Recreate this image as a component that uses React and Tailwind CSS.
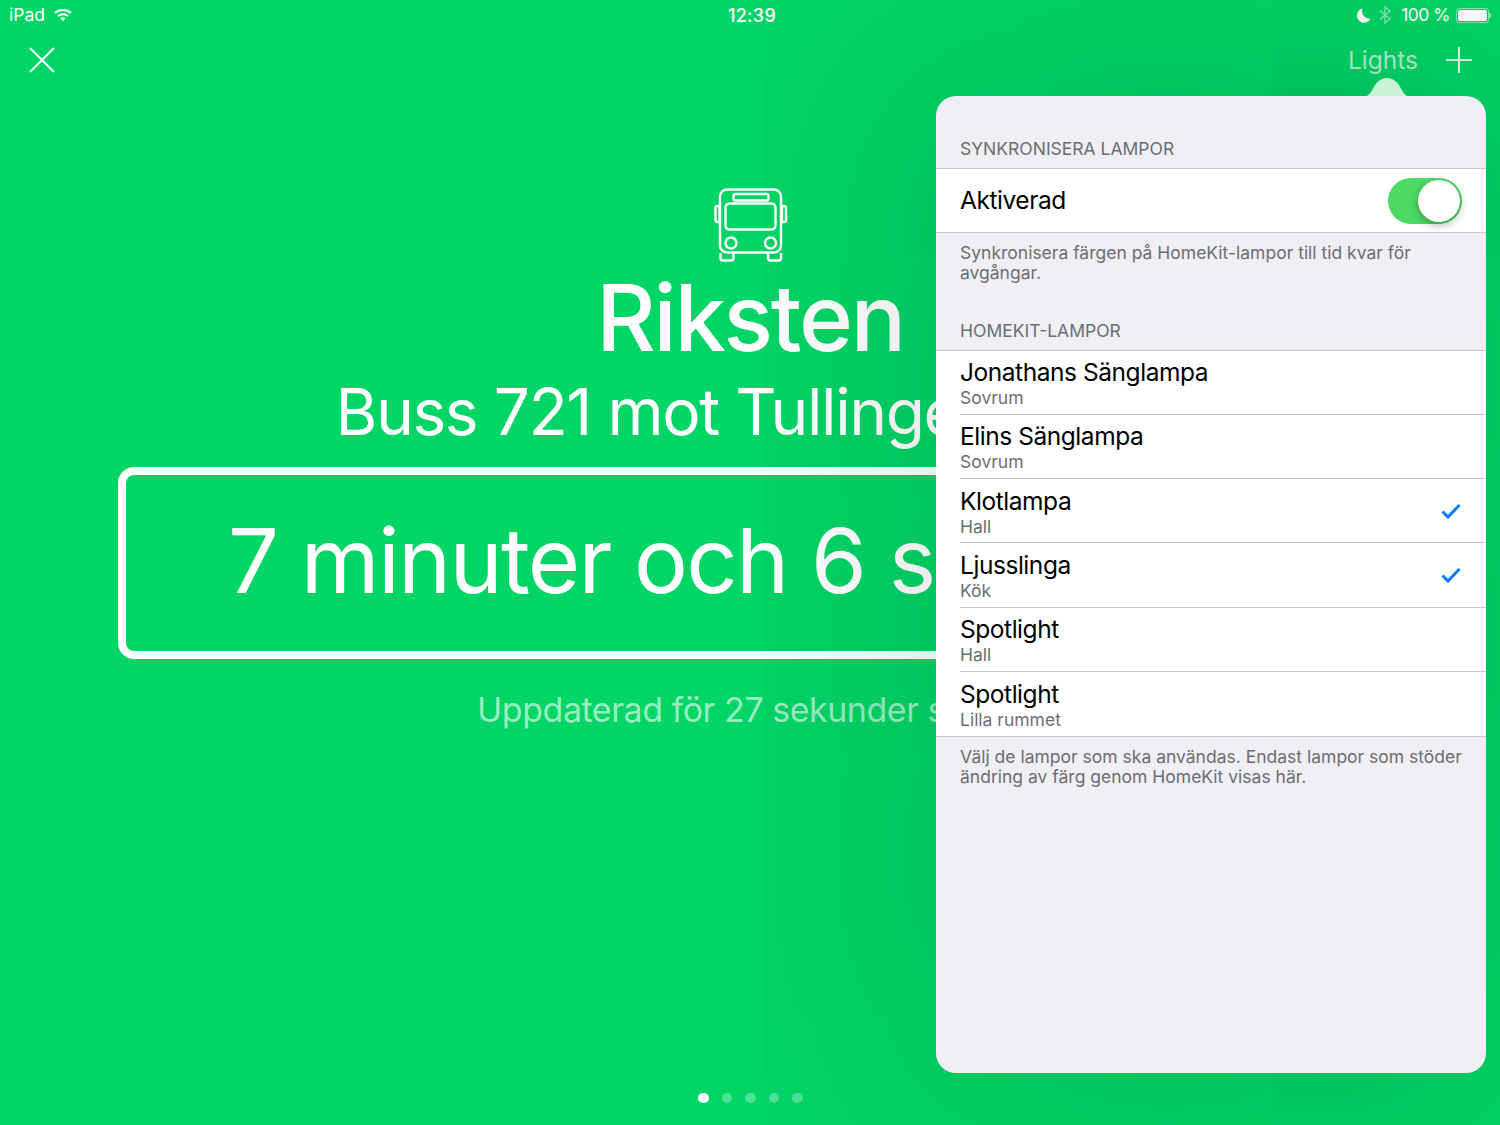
import React from "react";

const font = { fontFamily: "Inter, Roboto, 'Liberation Sans', sans-serif" };

const lamps = [
  { name: "Jonathans Sänglampa", room: "Sovrum" },
  { name: "Elins Sänglampa", room: "Sovrum" },
  { name: "Klotlampa", room: "Hall", checked: true },
  { name: "Ljusslinga", room: "Kök", checked: true },
  { name: "Spotlight", room: "Hall" },
  { name: "Spotlight", room: "Lilla rummet" },
];

const WifiIcon = () => (
  <svg width="18" height="14" viewBox="0 0 18 14" fill="none" stroke="white" strokeWidth="2">
    <path d="M1 5 C5.5 1 12.5 1 17 5" />
    <path d="M4 8 C6.8 5.6 11.2 5.6 14 8" />
    <path d="M6.3 10.3 L9 13.2 L11.7 10.3 C10.2 9 7.8 9 6.3 10.3 Z" fill="white" stroke="none" />
  </svg>
);

const MoonIcon = () => (
  <svg width="14" height="15" viewBox="0 0 14 15">
    <path d="M5.5 0.5 A7.2 7.2 0 1 0 13.6 10.6 A7.6 7.6 0 0 1 5.5 0.5 Z" fill="white" />
  </svg>
);

const BluetoothIcon = () => (
  <svg width="13" height="18" viewBox="0 0 13 18" fill="none" stroke="white" strokeOpacity="0.5" strokeWidth="1.4">
    <path d="M1 4.6 L11 13 L6 17 L6 1 L11 5 L1 13.4" />
  </svg>
);

const BatteryIcon = () => (
  <div className="flex items-center">
    <div className="h-[15px] w-[33px] rounded-[3px] border border-white/50 p-[1px]">
      <div className="h-full w-full rounded-[2px] bg-white" />
    </div>
    <div className="h-[5px] w-[2px] rounded-r-[1px] bg-white/50" />
  </div>
);

const BusIcon = () => (
  <svg width="74" height="74" viewBox="0 0 74 74" fill="none" stroke="white" strokeWidth="2.4" className="ml-[1px]">
    <rect x="6" y="1.5" width="61" height="63" rx="7" />
    <rect x="19.5" y="6" width="35" height="6.5" rx="2" />
    <rect x="11.5" y="15.5" width="50" height="26" rx="4" />
    <circle cx="17" cy="55" r="5.5" />
    <circle cx="56.5" cy="55" r="5.5" />
    <path d="M1.5 20 Q1.5 18 3.5 18 L5.5 18 L5.5 34 L3.5 34 Q1.5 34 1.5 32 Z" />
    <path d="M72 20 Q72 18 70 18 L68 18 L68 34 L70 34 Q72 34 72 32 Z" />
    <path d="M6.5 65 L6.5 70 Q6.5 72.5 9 72.5 L17 72.5 Q19.5 72.5 19.5 70 L19.5 65" />
    <path d="M54 65 L54 70 Q54 72.5 56.5 72.5 L64.5 72.5 Q67 72.5 67 70 L67 65" />
  </svg>
);

const CheckIcon = () => (
  <svg width="20" height="16" viewBox="0 0 20 16" fill="none" stroke="#0a7aff" strokeWidth="3">
    <path d="M1.5 8.5 L7 14 L18.5 2" />
  </svg>
);

const PopoverArrow = () => (
  <svg width="42" height="18" viewBox="0 0 42 18" className="ml-[430px] block">
    <path d="M0 18 C3 18 5 14 9 7 C12 2.5 17 0 21 0 C25 0 30 2.5 33 7 C37 14 39 18 42 18 Z" fill="#c9f4d5" />
  </svg>
);

const SectionLabel = ({ children, className }) => (
  <p className={`px-6 text-[17.5px] leading-5 uppercase text-[#6d6d72] ${className}`}>{children}</p>
);

const LampRow = ({ lamp, last }) => (
  <div className={`flex pl-6 ${last ? "h-[63.6px]" : "h-[64.33px]"}`}>
    <div className={`flex flex-1 items-center justify-between pr-[25px] ${last ? "" : "border-b border-[#c8c7cc]"}`}>
      <div className="pt-[3px]">
        <p className="text-[24.5px] leading-[29px] tracking-[-0.45px] text-black">{lamp.name}</p>
        <p className="text-[17.5px] leading-[22px] text-[#6d6d72]">{lamp.room}</p>
      </div>
      {lamp.checked && <CheckIcon />}
    </div>
  </div>
);

const LightsPopover = () => (
  <div className="absolute top-[78px] left-[936px] w-[550px]">
    <PopoverArrow />
    <div className="h-[977px] rounded-[20px] bg-[#efeff4] pt-[43px] shadow-[0_0_250px_rgba(0,0,0,0.22)]">
      <SectionLabel className="pb-[9px]">Synkronisera lampor</SectionLabel>
      <div className="flex h-[65px] items-center justify-between border-y border-[#c8c7cc] bg-white pr-6 pl-6">
        <span className="text-[24.5px] tracking-[-0.45px] text-black">Aktiverad</span>
        <div className="flex h-[46px] w-[74px] items-center justify-end rounded-full bg-[#4cd964] p-[2px]">
          <div className="h-[42px] w-[42px] rounded-full bg-white shadow-[0_3px_8px_rgba(0,0,0,0.3)]" />
        </div>
      </div>
      <p className="px-6 pt-[10px] text-[17.5px] leading-5 text-[#6d6d72]">
        Synkronisera färgen på HomeKit-lampor till tid kvar för avgångar.
      </p>
      <SectionLabel className="pt-[38px] pb-[8.5px]">HomeKit-lampor</SectionLabel>
      <div className="border-y border-[#c8c7cc] bg-white">
        {lamps.map((lamp, i) => (
          <LampRow key={i} lamp={lamp} last={i === lamps.length - 1} />
        ))}
      </div>
      <p className="px-6 pt-[10px] text-[17.5px] leading-5 text-[#6d6d72]">
        Välj de lampor som ska användas. Endast lampor som stöder ändring av färg genom HomeKit visas här.
      </p>
    </div>
  </div>
);

export default function App() {
  return (
    <div className="relative flex h-[1125px] w-[1500px] flex-col overflow-hidden bg-[#00d566] text-white" style={font}>
      {/* status bar */}
      <div className="grid h-[30px] grid-cols-3 items-center px-[9px] text-[17.5px]">
        <div className="flex items-center gap-[9px]">
          <span>iPad</span>
          <WifiIcon />
        </div>
        <span className="pl-[4px] text-center text-[18px] font-medium tracking-[0.3px]">12:39</span>
        <div className="flex items-center justify-end gap-[8px]">
          <MoonIcon />
          <BluetoothIcon />
          <span className="mr-[-2px] ml-[1px] tracking-[-0.5px]">100 %</span>
          <BatteryIcon />
        </div>
      </div>

      {/* nav bar */}
      <div className="flex h-[60px] items-center justify-between pr-[28px] pl-[29px]">
        <svg width="26" height="26" viewBox="0 0 26 26" stroke="white" strokeWidth="2">
          <path d="M1 1 L25 25 M25 1 L1 25" />
        </svg>
        <div className="flex items-center gap-[28px]">
          <span className="text-[24.5px] text-white/70">Lights</span>
          <svg width="26" height="26" viewBox="0 0 26 26" stroke="white" strokeOpacity="0.85" strokeWidth="2">
            <path d="M13 0 V26 M0 13 H26" />
          </svg>
        </div>
      </div>

      {/* departure */}
      <div className="flex flex-col items-center pt-[98px]">
        <BusIcon />
        <h1 className="mt-[2px] text-[92px] leading-[108px] font-medium tracking-[-2.3px]">Riksten</h1>
        {/* the line runs on behind the popover in the reference, so it is centred with room kept on the right */}
        <p className="mt-[2px] pr-[205px] text-[64px] leading-[76px] tracking-[-1.4px] whitespace-nowrap">Buss 721 mot Tullinge</p>
        <div className="mt-[17px] flex h-[192px] w-[1264px] items-center justify-center rounded-[16px] border-[8px] border-white pb-[5px]">
          <span className="text-[90px] tracking-[-1.75px] whitespace-nowrap">7 minuter och 6 sekunder</span>
        </div>
        <p className="mt-[29px] text-[34px] leading-[44px] tracking-[-0.47px] whitespace-nowrap text-white/60">
          Uppdaterad för 27 sekunder sedan
        </p>
      </div>

      {/* page dots */}
      <div className="mt-auto flex justify-center gap-[13px] pb-[22px] pl-[1px]">
        {[0, 1, 2, 3, 4].map((i) => (
          <div key={i} className={`h-[10.5px] w-[10.5px] rounded-full ${i === 0 ? "bg-white" : "bg-white/30"}`} />
        ))}
      </div>

      <LightsPopover />
    </div>
  );
}
